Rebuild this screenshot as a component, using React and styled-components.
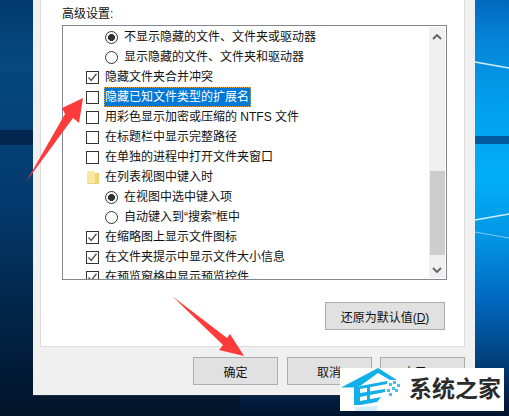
import styled, { createGlobalStyle } from "styled-components";

const GlobalStyle = createGlobalStyle`
  html, body {
    margin: 0;
    padding: 0;
    background: #02142d;
  }
`;

const rows = [
  { kind: "radio", on: true, text: "不显示隐藏的文件、文件夹或驱动器" },
  { kind: "radio", text: "显示隐藏的文件、文件夹和驱动器" },
  { kind: "check", on: true, text: "隐藏文件夹合并冲突" },
  { kind: "check", selected: true, text: "隐藏已知文件类型的扩展名" },
  { kind: "check", text: "用彩色显示加密或压缩的 NTFS 文件" },
  { kind: "check", text: "在标题栏中显示完整路径" },
  { kind: "check", text: "在单独的进程中打开文件夹窗口" },
  { kind: "folder", text: "在列表视图中键入时" },
  { kind: "radio", on: true, text: "在视图中选中键入项" },
  { kind: "radio", text: "自动键入到“搜索”框中" },
  { kind: "check", on: true, text: "在缩略图上显示文件图标" },
  { kind: "check", on: true, text: "在文件夹提示中显示文件大小信息" },
  { kind: "check", on: true, text: "在预览窗格中显示预览控件" },
];

function Row({ kind, on, selected, text }) {
  return (
    <RowWrap $indent={kind === "radio"}>
      {kind === "check" && (
        <CheckBox>
          {on && (
            <svg width="11" height="11" viewBox="0 0 11 11">
              <path d="M1.5 5.5 L4.2 8.5 L9.5 1.8" fill="none" stroke="#555" strokeWidth="1.4" />
            </svg>
          )}
        </CheckBox>
      )}
      {kind === "radio" && <RadioDot $on={on} />}
      {kind === "folder" && (
        <FolderIcon viewBox="0 0 12 13" width="12" height="13">
          <path d="M0 0h7l1 2h4v11H0z" fill="#fce89f" />
          <path d="M8 2h4v11H0v-1h8z" fill="#f0d374" />
        </FolderIcon>
      )}
      <RowText $selected={selected}>{text}</RowText>
    </RowWrap>
  );
}

function Wallpaper() {
  return (
    <WallpaperSvg viewBox="0 0 509 416" width="509" height="416">
      <defs>
        <linearGradient id="wallLeft" x1="0" y1="0" x2="0" y2="1">
          <stop offset="0" stopColor="#043a6c" />
          <stop offset="0.15" stopColor="#05497f" />
          <stop offset="0.5" stopColor="#04396c" />
          <stop offset="0.68" stopColor="#022a52" />
          <stop offset="1" stopColor="#011429" />
        </linearGradient>
        <linearGradient id="wallRight" x1="0" y1="0" x2="0" y2="1">
          <stop offset="0" stopColor="#0268be" />
          <stop offset="0.1" stopColor="#0485d8" />
          <stop offset="0.25" stopColor="#02a0ec" />
          <stop offset="0.43" stopColor="#02aef5" />
          <stop offset="0.56" stopColor="#0298e6" />
          <stop offset="0.72" stopColor="#0168c0" />
          <stop offset="0.87" stopColor="#013f7a" />
          <stop offset="0.94" stopColor="#02244a" />
          <stop offset="1" stopColor="#02142d" />
        </linearGradient>
      </defs>
      <rect x="0" y="0" width="240" height="416" fill="url(#wallLeft)" />
      <rect x="240" y="0" width="269" height="416" fill="url(#wallRight)" />
      <rect x="0" y="130" width="240" height="15" fill="#02264f" />
      <rect x="240" y="136" width="269" height="8" fill="#035a9e" />
      <path d="M475 62 L509 68" stroke="#cfeefc" strokeWidth="1.6" />
      <path d="M475 220 L509 214" stroke="#cfeefc" strokeWidth="1.4" />
      <path d="M475 232 L509 238" stroke="#7fcdf2" strokeWidth="1" />
    </WallpaperSvg>
  );
}

export default function App() {
  return (
    <Desktop>
      <GlobalStyle />
      <Wallpaper />
      <Dialog>
        <Panel>
          <Legend>高级设置:</Legend>
          <ListBox>
            <ListRows>
              {rows.map((r) => (
                <Row key={r.text} {...r} />
              ))}
            </ListRows>
            <ScrollBar>
              <ScrollArrow viewBox="0 0 10 6" width="10" height="6">
                <path d="M1 5 L5 1 L9 5" fill="none" stroke="#606060" strokeWidth="1.8" />
              </ScrollArrow>
              <ScrollThumb />
              <ScrollArrow viewBox="0 0 10 6" width="10" height="6">
                <path d="M1 1 L5 5 L9 1" fill="none" stroke="#606060" strokeWidth="1.8" />
              </ScrollArrow>
            </ScrollBar>
          </ListBox>
          <RestoreRow>
            <Button $wide>
              还原为默认值(<u>D</u>)
            </Button>
          </RestoreRow>
        </Panel>
        <Footer>
          <Button>确定</Button>
          <Button>取消</Button>
          <Button>应用(A)</Button>
        </Footer>
      </Dialog>

      <Arrow viewBox="0 0 509 416" width="509" height="416">
        <path d="M26 182 L65 114 L62 108 L83 98 L79 123 L73 118 Z" fill="#fe3b3b" />
        <path d="M172 296 L227 338 L230 334 L244 356 L219 350 L223 345 Z" fill="#fe3b3b" />
      </Arrow>

      <Watermark>
        <svg viewBox="0 0 62 43" width="62" height="43">
          <path d="M1 19.5 L38 0 L57 12 L50 12 L38 5 L18 19.5 Z" fill="#12b0e6" />
          <path d="M14 19h6v18h-6z" fill="#12b0e6" />
          <path d="M20 18 L47 13 V16 L20 21 Z" fill="#12b0e6" />
          <path d="M20 25 L45 21 V24 L20 29 Z" fill="#12b0e6" />
          <path d="M20 33 L41 29 L37 34 L20 37 Z" fill="#12b0e6" />
          <path d="M27 17h3v18h-3z" fill="#12b0e6" />
          <path d="M49 15h3v3h-3zM53 13h3v3h-3zM57 16h3v3h-3zM52 19h3v3h-3zM47 21h3v3h-3zM55 21h3v3h-3zM49 25h3v3h-3z" fill="#48c0ea" />
          <path d="M14 39 L38 38 L36 43 L16 43 Z" fill="#d3effa" />
        </svg>
        <WatermarkText>系统之家</WatermarkText>
      </Watermark>
    </Desktop>
  );
}

const Desktop = styled.div`
  position: relative;
  width: 509px;
  height: 416px;
  overflow: hidden;
  padding-left: 33px;
  box-sizing: border-box;
  font-family: "Liberation Sans", "Noto Sans CJK SC", sans-serif;
`;

const WallpaperSvg = styled.svg`
  position: absolute;
  left: 0;
  top: 0;
`;

const Dialog = styled.div`
  position: relative;
  width: 442px;
  height: 395px;
  background: #f0f0f0;
  box-sizing: border-box;
  padding: 0 10px 0 7px;
  display: flex;
  flex-direction: column;
  box-shadow: 0 1px 0 #1a2a3a;
`;

const Panel = styled.div`
  height: 347px;
  background: #fff;
  border: 1px solid #dcdcdc;
  border-top: none;
  box-sizing: border-box;
  padding: 0 19px 0 21px;
`;

const Legend = styled.div`
  height: 25px;
  font-size: 12px;
  line-height: 28px;
  color: #111;
`;

const ListBox = styled.div`
  width: 385px;
  height: 255px;
  box-sizing: border-box;
  border: 1px solid #828790;
  display: flex;
  justify-content: space-between;
  overflow: hidden;
`;

const ListRows = styled.div`
  flex: 1;
  overflow: hidden;
  padding: 1px 0 0 23px;
`;

const RowWrap = styled.div`
  height: 20px;
  display: flex;
  align-items: center;
  padding-left: ${(p) => (p.$indent ? "19px" : "0")};
`;

const CheckBox = styled.span`
  width: 13px;
  height: 13px;
  box-sizing: border-box;
  border: 1px solid #333;
  background: #fff;
  margin-right: 5px;
  display: flex;
  align-items: center;
  justify-content: center;
  flex: none;
`;

const RadioDot = styled.span`
  width: 13px;
  height: 13px;
  box-sizing: border-box;
  border: 1px solid #333;
  border-radius: 50%;
  margin-right: 5px;
  flex: none;
  background: ${(p) =>
    p.$on ? "radial-gradient(circle, #333 0 3.2px, #fff 3.8px)" : "#fff"};
`;

const FolderIcon = styled.svg`
  margin: 0 5px 0 1px;
  flex: none;
`;

const RowText = styled.span`
  font-size: 12px;
  line-height: 20px;
  height: 20px;
  white-space: nowrap;
  box-sizing: border-box;
  color: ${(p) => (p.$selected ? "#fff" : "#111")};
  background: ${(p) => (p.$selected ? "#0078d7" : "transparent")};
  outline: ${(p) => (p.$selected ? "1px dotted #e0a040" : "none")};
  outline-offset: -1px;
  padding: ${(p) => (p.$selected ? "0 2px 0 1px" : "0 0 0 1px")};
`;

const ScrollBar = styled.div`
  width: 16px;
  margin: 1px 1px 1px 0;
  background: #f0f0f0;
  display: flex;
  flex-direction: column;
  align-items: center;
  padding-top: 7px;
  box-sizing: border-box;
`;

const ScrollArrow = styled.svg`
  flex: none;
`;

const ScrollThumb = styled.div`
  width: 15px;
  height: 84px;
  background: #cdcdcd;
  margin: 131px 0 12px;
`;

const RestoreRow = styled.div`
  display: flex;
  justify-content: flex-end;
  padding: 22px 0 0;
`;

const Button = styled.button`
  width: ${(p) => (p.$wide ? "120px" : "86px")};
  height: 28px;
  background: #e1e1e1;
  border: 1px solid #adadad;
  border-radius: 0;
  padding: 0;
  font-family: inherit;
  font-size: 12px;
  color: #111;
`;

const Footer = styled.div`
  display: flex;
  gap: 8.5px;
  padding: 10px 0 0 153px;
`;

const Arrow = styled.svg`
  position: absolute;
  left: 0;
  top: 0;
  pointer-events: none;
`;

const Watermark = styled.div`
  position: absolute;
  left: 340px;
  top: 368px;
  width: 164px;
  height: 43px;
  background: #fff;
  display: flex;
  align-items: center;
  gap: 7px;
`;

const WatermarkText = styled.span`
  font-size: 23px;
  font-weight: 700;
  color: #2b2b2b;
  line-height: 1;
  white-space: nowrap;
`;
